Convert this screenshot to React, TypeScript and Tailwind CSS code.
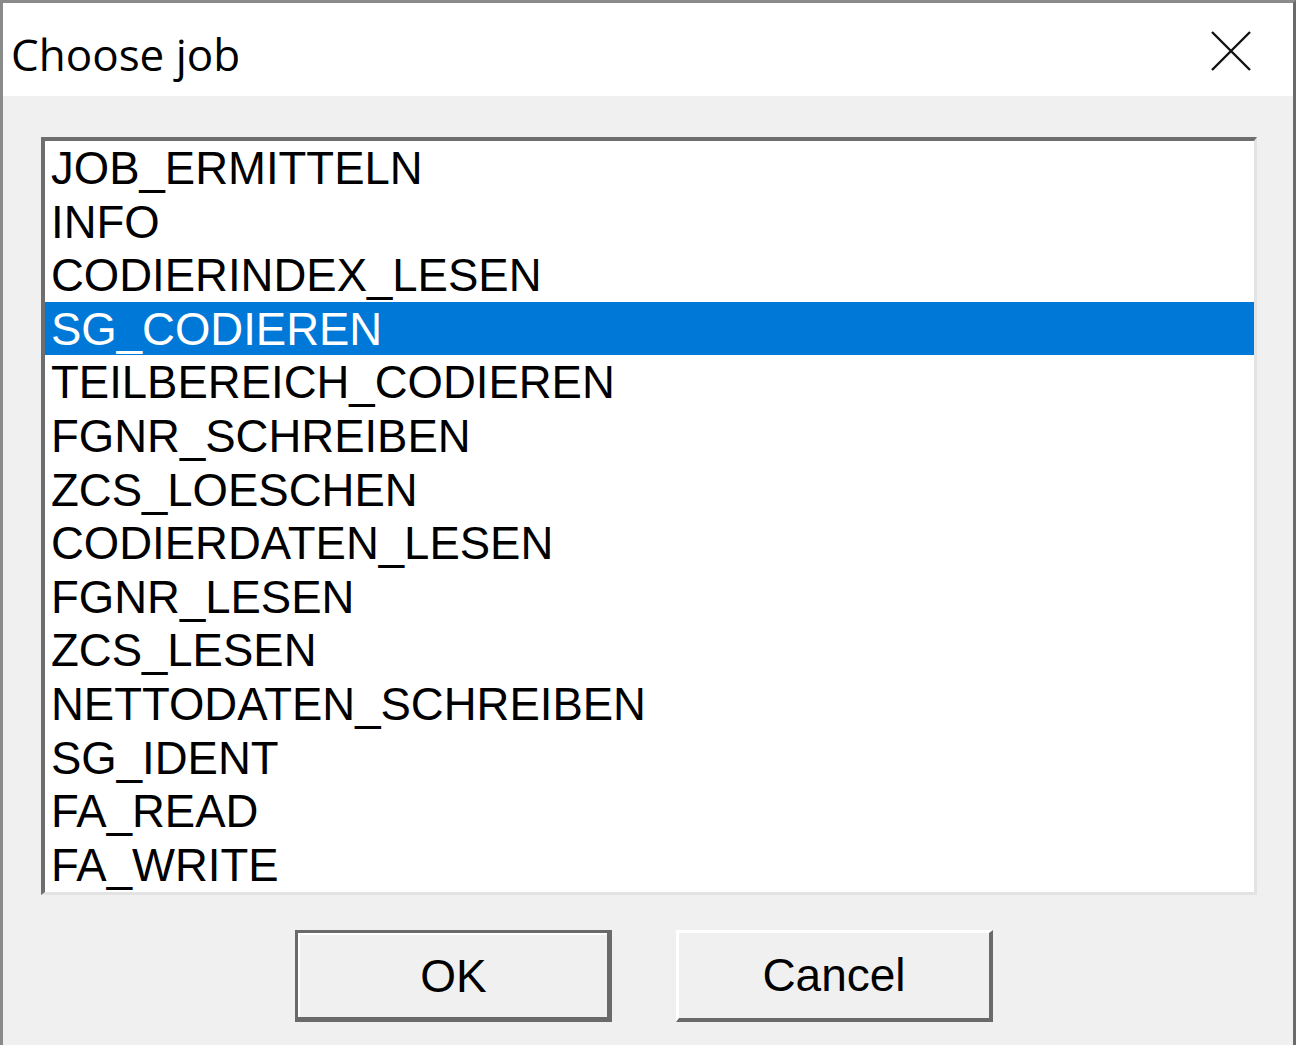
import { useState } from "react";

const jobs = [
  "JOB_ERMITTELN",
  "INFO",
  "CODIERINDEX_LESEN",
  "SG_CODIEREN",
  "TEILBEREICH_CODIEREN",
  "FGNR_SCHREIBEN",
  "ZCS_LOESCHEN",
  "CODIERDATEN_LESEN",
  "FGNR_LESEN",
  "ZCS_LESEN",
  "NETTODATEN_SCHREIBEN",
  "SG_IDENT",
  "FA_READ",
  "FA_WRITE",
];

/**
 * Dialog "Choose job" im Windows-Stil
 */
const App = () => {
  const [selected, setSelected] = useState(3);

  return (
    <div className="h-[1045px] w-[1296px] overflow-hidden border-t-[3px] border-l-[3px] border-r-[3px] border-t-[#8a8a8a] border-l-[#8a8a8a] border-r-[#6a6a6a] bg-[#f0f0f0]">
      {/* ===== Titelleiste ===== */}
      <div className="flex h-[93px] items-start justify-between bg-white pl-[8px] pr-[40px]">
        <span className="mt-[23px] text-[44px] leading-[56px] text-black [font-family:'Open_Sans','Noto_Sans',sans-serif]">
          Choose job
        </span>
        <svg className="mt-[26px]" width="44" height="44" viewBox="0 0 44 44">
          <path d="M3 3 L41 41 M41 3 L3 41" stroke="#111" strokeWidth="2.4" />
        </svg>
      </div>

      {/* ===== Liste ===== */}
      <div className="px-[38px] pt-[41px]">
        <div className="h-[758px] w-[1216px] border-t-[4px] border-l-[4px] border-b-[3px] border-r-[3px] border-t-[#6e6e6e] border-l-[#6e6e6e] border-b-[#e3e3e3] border-r-[#e3e3e3] bg-white">
          {jobs.map((job, i) => (
            <div
              key={job}
              onClick={() => setSelected(i)}
              className={`h-[53.6px] pl-[6px] pt-[1px] text-[45.5px] leading-[53.6px] [font-family:'Liberation_Sans',Arial,sans-serif] ${
                i === selected ? "bg-[#0078d7] text-white" : "text-black"
              }`}
            >
              {job}
            </div>
          ))}
        </div>
      </div>

      {/* ===== Buttons ===== */}
      <div className="flex gap-[64px] pl-[292px] pt-[35px]">
        <button className="h-[92px] w-[317px] border-[3px] border-b-[5px] border-r-[5px] border-[#6a6a6a] bg-[#f0f0f0] text-[46px] text-black [font-family:'Liberation_Sans',Arial,sans-serif]">
          <span className="flex h-full w-full items-center justify-center border-t-[2px] border-l-[2px] border-white">
            OK
          </span>
        </button>
        <button className="h-[92px] w-[317px] border-t-[3px] border-l-[3px] border-b-[4px] border-r-[4px] border-t-white border-l-white border-b-[#6a6a6a] border-r-[#6a6a6a] bg-[#f0f0f0] text-[46px] text-black [font-family:'Liberation_Sans',Arial,sans-serif]">
          Cancel
        </button>
      </div>
    </div>
  );
};

export default App;
